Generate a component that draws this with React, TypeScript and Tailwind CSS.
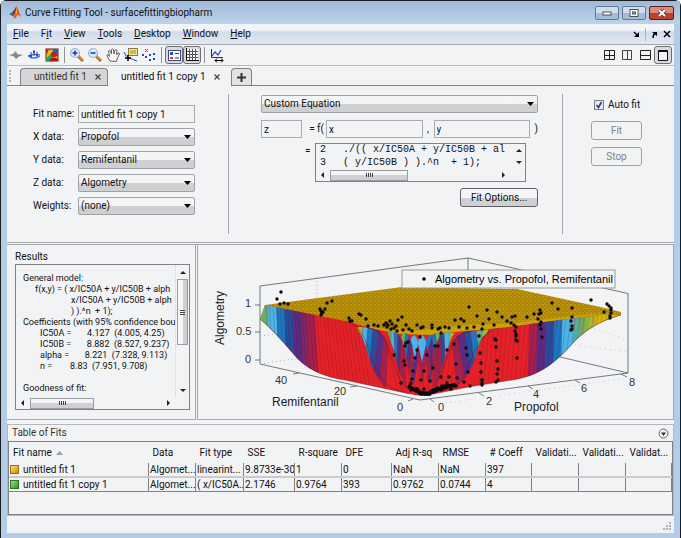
import type { ReactNode } from 'react';

const RAISED = 'bg-linear-to-b from-[#f4f5f6] from-50% to-[#cfd0d1] to-50%';
const FIELD = 'h-[18px] w-full min-w-0 border border-[#a9abad] bg-[#f1f3f5] px-[2px] outline-none';

const MENUS = ['File', 'Fit', 'View', 'Tools', 'Desktop', 'Window', 'Help'];

function Icon({ children, w = 16 }: { children: ReactNode; w?: number }) {
  return (
    <svg width={w} height="16" viewBox={`0 0 ${w} 16`} fill="none" aria-hidden="true">
      {children}
    </svg>
  );
}

function ToolButton({ label, active, children }: { label: string; active?: boolean; children: ReactNode }) {
  return (
    <button
      type="button"
      aria-label={label}
      className={
        active
          ? 'flex h-[18px] w-[18px] items-center justify-center rounded-[3px] border border-[#6d6f73] bg-[#d9dadd]'
          : 'flex h-[18px] w-[18px] items-center justify-center'
      }
    >
      {children}
    </button>
  );
}

function TitleBar() {
  return (
    <header className="flex h-[23px] items-center bg-linear-to-b from-[#9fb9d8] to-[#bcd3ea] pl-[8px] pr-[6px]">
      <svg width="12" height="13" viewBox="0 0 12 13" aria-hidden="true">
        <path d="M0 8 L3.5 6 L6 8 L3.5 10Z" fill="#2a6f9c" />
        <path d="M3.5 6 Q5.500 4 7.500 0 L6.500 7 L4.500 10 L3.500 10 L5 8Z" fill="#7a2a1c" />
        <path d="M7.500 0 Q9 3 12 11 Q10 8.500 8.500 9 Q6.500 12.500 5.500 12.500 L4 9.500 Q6.500 7 7.500 0Z" fill="#e0591c" />
        <path d="M7.500 1 Q8.500 5 8 8 Q6.500 8 6 11Z" fill="#f5a02c" />
      </svg>
      <h1 className="ml-[4px] text-[10px] leading-[16px] whitespace-nowrap">Curve Fitting Tool - surfacefittingbiopharm</h1>
      <div className="ml-auto flex gap-[3px]">
        <button type="button" aria-label="Minimize" className="flex h-[14px] w-[24px] items-center justify-center rounded-[2px] border border-[#66788f] bg-linear-to-b from-[#cfdeee] from-50% to-[#a3bcd8] to-50%">
          <svg width="10" height="6" viewBox="0 0 10 6"><rect x="1" y="2" width="8" height="3" fill="#fff" stroke="#4b5361" /></svg>
        </button>
        <button type="button" aria-label="Maximize" className="flex h-[14px] w-[24px] items-center justify-center rounded-[2px] border border-[#66788f] bg-linear-to-b from-[#cfdeee] from-50% to-[#a3bcd8] to-50%">
          <svg width="10" height="8" viewBox="0 0 10 8"><rect x="1" y=".5" width="8" height="7" fill="#fff" stroke="#4b5361" /><rect x="3.500" y="3" width="3" height="2" fill="#a3bcd8" stroke="#4b5361" /></svg>
        </button>
        <button type="button" aria-label="Close" className="flex h-[14px] w-[25px] items-center justify-center rounded-[2px] border border-[#5c1f1a] bg-linear-to-b from-[#d9897d] from-50% to-[#bf4029] to-50%">
          <svg width="10" height="8" viewBox="0 0 10 8"><path d="M2 1 L8 7 M8 1 L2 7" stroke="#4b3030" strokeWidth="3.500" /><path d="M2 1 L8 7 M8 1 L2 7" stroke="#fff" strokeWidth="2" /></svg>
        </button>
      </div>
    </header>
  );
}

function MenuBar() {
  return (
    <nav className="flex h-[21px] items-center border-b border-[#a5a7aa] bg-linear-to-b from-[#f2f4f8] from-30% via-[#d2dbec] via-40% to-[#e2e8f3] pl-[6px] pr-[3px]">
      {MENUS.map((m) => (
        <button key={m} type="button" className="mr-[12px] leading-[16px]">
          {m === 'Fit' ? (<>F<u>i</u>t</>) : (<><u>{m[0]}</u>{m.slice(1)}</>)}
        </button>
      ))}
      <div className="ml-auto flex items-center gap-[5px]">
        <button type="button" aria-label="Dock down"><svg width="7" height="7" viewBox="0 0 7 7"><path d="M1 1 L5 5" stroke="#000" strokeWidth="1.500" /><path d="M6 1 V6 H1Z" /></svg></button>
        <span className="h-[13px] w-px bg-[#a9b4c6]" />
        <button type="button" aria-label="Undock"><svg width="7" height="7" viewBox="0 0 7 7"><path d="M1 1 H6 V5Z" /><path d="M5 2 Q2 3 2 7" fill="none" stroke="#000" strokeWidth="1.500" /></svg></button>
        <button type="button" aria-label="Close document"><svg width="8" height="8" viewBox="0 0 8 8"><path d="M1 1 L7 7 M7 1 L1 7" stroke="#000" strokeWidth="1.500" /></svg></button>
      </div>
    </nav>
  );
}

function Magnifier({ plus }: { plus?: boolean }) {
  return (
    <Icon>
      <path d="M9 9 L14 14" stroke="#b5641c" strokeWidth="3" />
      <path d="M9.500 9 L13.500 13" stroke="#f4b860" strokeWidth="1" />
      <circle cx="6" cy="6" r="4.500" fill="#d8ecfb" stroke="#9db6d6" strokeWidth="1.200" />
      <path d={plus ? 'M3.500 6 H8.500 M6 3.500 V8.500' : 'M3.500 6 H8.500'} stroke="#143c9c" strokeWidth="1.500" />
    </Icon>
  );
}

function ToolBar() {
  return (
    <div className="flex h-[21px] items-center border-b border-[#b9bbbd] pr-[2px]">
      <ToolButton label="Residuals plot">
        <Icon><path d="M1 8 L5 7 L8 4 L9 7 L15 8 L11 9.500 L8 12 L6 9.500Z" fill="#85888b" /></Icon>
      </ToolButton>
      <ToolButton label="Main plot">
        <Icon><path d="M2 9 Q8 6 14 8 M2 9 Q8 13 14 9 M5 5 V11 M8 3 V9 M11 5 V10" stroke="#2a3cc0" /><path d="M4 8 H6 V10 H4Z M7 4 H9 V6 H7Z M10 7 H12 V9 H10Z" fill="#2447e0" /><path d="M4 11 H11" stroke="#4aa0e8" /></Icon>
      </ToolButton>
      <ToolButton label="Contour plot">
        <Icon><rect x="2" y="2" width="12" height="12" fill="#efb42c" stroke="#5b2410" /><path d="M2 12 Q7 7 10 2 H14 V10 Q10 7 6 14 H2Z" fill="#24a058" /><path d="M9 2 H14 V9 Q9 8 9 2Z" fill="#1c64d0" /><path d="M10 5 A3 2.500 0 1 0 13 7Z M2 3 L5 2 L3 7Z" fill="#d8140c" /><path d="M5 14 Q8 8 14 12 V14Z" fill="#b31408" /></Icon>
      </ToolButton>
      <span className="mx-[3px] h-[16px] w-px bg-[#8f9194]" />
      <ToolButton label="Zoom in"><Magnifier plus /></ToolButton>
      <ToolButton label="Zoom out"><Magnifier /></ToolButton>
      <ToolButton label="Pan">
        <Icon><path d="M5 14 L2 9 Q1.500 7 3.500 8 L4.500 9.500 L3.500 4 Q4 2.500 5.500 4 L6.500 7 L6.500 2.500 Q7.500 1 8.500 2.500 L9 7 L10 3 Q11.500 2 12 3.500 L11.500 8 L13 6 Q14.500 5.500 14.500 7 L12 12 L11.500 14.500Z" fill="#fbf6ee" stroke="#60646b" /></Icon>
      </ToolButton>
      <ToolButton label="Data cursor">
        <Icon><rect x="5.500" y="1.500" width="9" height="7" fill="#f6e58c" stroke="#8c7c34" /><path d="M7 4 H13 M7 6 H13" stroke="#9c8c44" /><path d="M1 5 Q3 10 6 11 T14 14" stroke="#2440c0" /><path d="M5 8 V14 M2 11 H8" stroke="#000" strokeWidth="1.500" /></Icon>
      </ToolButton>
      <ToolButton label="Exclude outliers">
        <Icon><path d="M4 2 L7 5 M7 2 L4 5" stroke="#d83024" /><path d="M1 7 H3 V9 H1Z M4 9 H6 V11 H4Z M8 7 H10 V9 H8Z M12 6 H14 V8 H12Z M8 12 H10 V14 H8Z M12 11 H14 V13 H12Z" fill="#3040c8" /></Icon>
      </ToolButton>
      <span className="mx-[3px] h-[16px] w-px bg-[#8f9194]" />
      <ToolButton label="Legend" active>
        <Icon><rect x="2.500" y="3.500" width="12" height="10" fill="#fff" stroke="#3a4a80" /><path d="M4 5 H7 V8 H4Z" fill="#2c48d0" /><path d="M4 10 H7 V12 H4Z" fill="#d04030" /><path d="M9 6.500 H13 M9 11 H13" stroke="#333" /></Icon>
      </ToolButton>
      <ToolButton label="Grid" active>
        <Icon><rect x="2" y="2" width="12" height="12" fill="#fff" /><path d="M2 4.500 H14 M2 7.500 H14 M2 10.500 H14 M5.500 2 V13 M8.500 2 V13 M11.500 2 V13" stroke="#555" /><path d="M2.500 1 V13.500 H15" stroke="#111" /></Icon>
      </ToolButton>
      <span className="mx-[3px] h-[16px] w-px bg-[#8f9194]" />
      <ToolButton label="Axes limits">
        <Icon><path d="M2.500 2 V10.500 H14" stroke="#333" /><path d="M3 9 L6 5 L9 8 L12 3" stroke="#2440d0" strokeWidth="1.200" /><path d="M6 13.500 H14 M8 11.500 L6 13.500 L8 15.500 M12 11.500 L14 13.500 L12 15.500" stroke="#000" /></Icon>
      </ToolButton>
      <div className="ml-auto flex items-center">
        <ToolButton label="Tile four"><Icon><path d="M3.500 3.500 H13.500 V12.500 H3.500Z M8.500 3.500 V12.500 M3.500 8.500 H13.500" stroke="#222" /></Icon></ToolButton>
        <ToolButton label="Tile left and right"><Icon><path d="M3.500 3.500 H12.500 V12.500 H3.500Z M8.500 3.500 V12.500" stroke="#444" /></Icon></ToolButton>
        <ToolButton label="Tile top and bottom"><Icon><path d="M3.500 3.500 H13.500 V12.500 H3.500Z M3.500 8.500 H13.500" stroke="#222" /></Icon></ToolButton>
        <ToolButton label="Maximize document" active><Icon><path d="M3.500 3.500 H12.500 V13.500 H3.500Z M3.500 4.500 H12.500" stroke="#111" fill="#f4f5f6" /></Icon></ToolButton>
      </div>
    </div>
  );
}

function TabCross() {
  return <svg width="6" height="6" viewBox="0 0 6 6"><path d="M.5 .5 L5.500 5.500 M5.500 .5 L.5 5.500" stroke="#444" strokeWidth="1.200" /></svg>;
}

function TabBar() {
  return (
    <div className="flex h-[20px] items-end border-b border-[#808285] pl-[2px] leading-[16px] whitespace-nowrap" role="tablist">
      <span className="mr-[9px] mb-[3px] h-[12px] border-l-2 border-dotted border-[#b4b6b8]" />
      <div role="tab" className="flex h-[17px] w-[88px] items-center rounded-t-[4px] border border-b-0 border-[#808285] bg-[#d4d5d6] pl-[13px] text-[#333]">
        untitled fit 1
        <button type="button" aria-label="Close tab" className="mr-[6px] ml-auto"><TabCross /></button>
      </div>
      <div role="tab" aria-selected="true" className="-mb-px flex h-[19px] w-[123px] items-center bg-[#f1f3f5] pl-[13px]">
        untitled fit 1 copy 1
        <button type="button" aria-label="Close tab" className="mr-[11px] ml-auto"><TabCross /></button>
      </div>
      <button type="button" aria-label="New fit" className="flex h-[17px] w-[21px] items-center justify-center rounded-t-[4px] border border-b-0 border-[#808285] bg-[#e2e3e5]">
        <svg width="9" height="9" viewBox="0 0 9 9"><path d="M4.500 0 V9 M0 4.500 H9" stroke="#333" strokeWidth="2" /></svg>
      </button>
    </div>
  );
}

function Select({ id, value, label }: { id: string; value: string; label?: string }) {
  return (
    <div className="relative w-full">
      <select id={id} aria-label={label} defaultValue={value} className={`block h-[18px] w-full appearance-none rounded-[2px] border border-[#a0a2a5] pl-[2px] outline-none ${RAISED}`}>
        <option>{value}</option>
      </select>
      <svg className="pointer-events-none absolute top-[7px] right-[4px]" width="7" height="4" viewBox="0 0 7 4"><path d="M0 0 H7 L3.500 4Z" /></svg>
    </div>
  );
}

function Row({ id, label, children }: { id: string; label: string; children: ReactNode }) {
  return (
    <div className="flex items-center">
      <label htmlFor={id} className="w-[45px] shrink-0 whitespace-nowrap">{label}</label>
      <div className="w-[117px]">{children}</div>
    </div>
  );
}

function Arrow({ dir }: { dir: 'up' | 'down' | 'left' | 'right' }) {
  const d = { up: 'M0 5 H6 L3 2Z', down: 'M0 1 H6 L3 4Z', left: 'M5 0 V6 L2 3Z', right: 'M1 0 V6 L4 3Z' }[dir];
  return <svg className="shrink-0" width="6" height="6" viewBox="0 0 6 6"><path d={d} fill="#222" /></svg>;
}

function HScroll({ thumb }: { thumb: string }) {
  return (
    <div className="flex h-[12px] items-center px-[3px]">
      <Arrow dir="left" />
      <div className={`ml-[5px] flex h-[11px] items-center justify-center gap-px border border-[#9a9c9f] ${RAISED} ${thumb}`}>
        {[0, 1, 2, 3].map((i) => <i key={i} className="h-[4px] w-px bg-[#444]" />)}
      </div>
      <span className="ml-auto"><Arrow dir="right" /></span>
    </div>
  );
}

const CODE = [
  ['2', './(( x/IC50A + y/IC50B + al'],
  ['3', '( y/IC50B ) ).^n  + 1);'],
];

function FitPanel() {
  return (
    <section className="flex min-h-[157px] border-b border-[#a5a7aa] py-[8px]">
      <div className="flex w-[222px] shrink-0 flex-col gap-[5px] border-r border-[#a5a7aa] pt-[11px] pl-[26px]">
        <Row id="fit-name" label="Fit name:"><input id="fit-name" defaultValue="untitled fit 1 copy 1" className={FIELD} /></Row>
        <Row id="x-data" label="X data:"><Select id="x-data" value="Propofol" /></Row>
        <Row id="y-data" label="Y data:"><Select id="y-data" value="Remifentanil" /></Row>
        <Row id="z-data" label="Z data:"><Select id="z-data" value="Algometry" /></Row>
        <Row id="weights" label="Weights:"><Select id="weights" value="(none)" /></Row>
      </div>
      <div className="min-w-0 flex-1 pt-px pr-[24px] pl-[32px]">
        <Select id="equation-type" label="Equation type" value="Custom Equation" />
        <div className="mt-[7px] flex items-center">
          <div className="w-[41px] shrink-0"><input aria-label="Output variable" defaultValue="z" className={FIELD} /></div>
          <span className="w-[22px] shrink-0 text-right">= f(</span>
          <input aria-label="First variable" defaultValue="x" className={`ml-[2px] flex-1 ${FIELD}`} />
          <span className="w-[11px] shrink-0 text-center">,</span>
          <input aria-label="Second variable" defaultValue="y" className={`flex-1 ${FIELD}`} />
          <span className="w-[8px] shrink-0 text-right">)</span>
        </div>
        <div className="mt-[5px] flex">
          <span className="w-[54px] shrink-0 pl-[44px] leading-[16px]">=</span>
          <div className="mr-[12px] h-[39px] min-w-0 flex-1 border border-[#808285]">
            <div className="flex h-[25px] items-end">
              <div className="min-w-0 flex-1 pl-[4px] font-['Liberation_Mono',monospace] leading-[13px] whitespace-pre">
                {CODE.map(([n, text]) => (
                  <p key={n} className="flex"><span className="w-[23px] shrink-0">{n}</span>{text}</p>
                ))}
              </div>
              <div className="flex h-full w-[13px] shrink-0 flex-col items-center justify-around"><Arrow dir="up" /><Arrow dir="down" /></div>
            </div>
            <div className="pr-[15px]"><HScroll thumb="w-[78px]" /></div>
          </div>
        </div>
        <div className="mt-[6px] flex justify-end">
          <button type="button" className={`h-[19px] w-[78px] rounded-[3px] border border-[#5f6164] ${RAISED}`}>Fit Options...</button>
        </div>
      </div>
      <div className="flex w-[112px] shrink-0 flex-col border-l border-[#a5a7aa] pt-[4px] pl-[28px]">
        <label className="flex h-[14px] items-center gap-[4px] pl-[3px]">
          <span className="relative flex h-[10px] w-[10px]">
            <input type="checkbox" defaultChecked className="peer h-[10px] w-[10px] appearance-none border border-[#7c8086] bg-[#e4e9f2]" />
            <svg className="pointer-events-none absolute inset-0 hidden peer-checked:block" width="10" height="10" viewBox="0 0 10 10"><path d="M2.500 5 L4.500 7.500 L7.500 2" fill="none" stroke="#2c3f8c" strokeWidth="1.600" /></svg>
          </span>
          Auto fit
        </label>
        <button type="button" disabled className="mt-[9px] h-[19px] w-[51px] rounded-[3px] border border-[#a0a2a5] text-[#808285]">Fit</button>
        <button type="button" disabled className="mt-[7px] h-[19px] w-[51px] rounded-[3px] border border-[#a0a2a5] text-[#808285]">Stop</button>
      </div>
    </section>
  );
}

const RESULTS = [
  ['pl-0', 'General model:'],
  ['pl-[12px]', 'f(x,y) = ( x/IC50A + y/IC50B + alph'],
  ['pl-[48px]', 'x/IC50A + y/IC50B + alph'],
  ['pl-[48px]', ') ).^n  + 1);'],
  ['pl-0', 'Coefficients (with 95% confidence bou'],
  ['pl-[17px]', 'IC50A =       4.127  (4.005, 4.25)'],
  ['pl-[17px]', 'IC50B =       8.882  (8.527, 9.237)'],
  ['pl-[17px]', 'alpha =       8.221  (7.328, 9.113)'],
  ['pl-[17px]', 'n =        8.83  (7.951, 9.708)'],
  ['pl-0', ' '],
  ['pl-0', 'Goodness of fit:'],
];

function ResultsPanel() {
  return (
    <section className="flex w-[189px] shrink-0 flex-col border-r border-b border-[#a5a7aa] pt-[5px] pr-[5px] pb-[9px] pl-[8px]">
      <h2 className="leading-[14px]">Results</h2>
      <div className="flex min-h-[146px] flex-1 flex-col border border-[#808285]">
        <div className="flex flex-1">
          <div className="min-w-0 flex-1 overflow-hidden pt-[8px] pl-[7px] text-[9px] leading-[11px] whitespace-pre">
            {RESULTS.map(([pad, text], i) => <p key={i} className={pad}>{text}</p>)}
          </div>
          <div className="flex w-[14px] flex-col items-center border-l border-dotted border-[#cfd1d3] pt-[4px] pb-[3px]">
            <Arrow dir="up" />
            <div className="mt-[4px] flex h-[66px] w-[11px] flex-col items-center justify-center gap-px border border-[#9a9c9f] bg-linear-to-r from-[#f4f5f6] from-50% to-[#cfd0d1] to-50%">
              {[0, 1, 2].map((i) => <i key={i} className="h-px w-[5px] bg-[#444]" />)}
            </div>
            <span className="mt-auto flex"><Arrow dir="down" /></span>
          </div>
        </div>
        <div className="pr-[14px]"><HScroll thumb="w-[64px]" /></div>
      </div>
    </section>
  );
}

const G = '#6cb060', LG = '#9cba38', C = '#4cb4ea', T = '#58b09c', B = '#1c78c0', D = '#2a4c9c', P = '#5c2c84', M = '#a4204c', R = '#e42228', Y = '#d8b40c';

type Pt = [number, number];
type Sheet = { top: Pt[]; edge: Pt[]; fill: string[] };

const SIDE_BANDS: [number, number, string][] = [
  [258, 265, G], [265, 268, T], [268, 276, C], [276, 284, B], [284, 292, D], [292, 300, P], [300, 306, '#7c2868'], [306, 314, M],
  [530, 538, M], [538, 547, P], [547, 555, D], [555, 563, B], [563, 575, C], [575, 581, T], [581, 586, G], [586, 595, LG], [595, 624, Y],
];

// Folds seen behind the front faces, listed from the middle outwards.
const SHEETS: Sheet[] = [
  { top: [[402, 334], [406, 333], [409, 336], [412, 345], [414, 356]], edge: [[401, 337], [404, 346], [407, 358], [409, 370], [411, 382]], fill: [G, B, P, M] },
  { top: [[439, 334], [435, 333], [432, 337], [429, 346], [426, 357]], edge: [[440, 337], [437, 346], [434, 358], [431, 370], [428, 382]], fill: [G, B, P, M] },
  { top: [[387, 331], [391, 331], [394, 332], [398, 334], [401, 340], [405, 352]], edge: [[388, 333], [391, 343], [395, 353], [397, 363], [400, 373], [406, 388]], fill: [G, C, B, P, M] },
  { top: [[455, 333], [449, 332], [444, 333], [440, 336], [436, 344], [432, 356]], edge: [[452, 337], [449, 345], [445, 356], [442, 367], [439, 377], [434, 388]], fill: [LG, C, D, M, M] },
  { top: [[358, 327], [363, 327], [368, 328], [373, 329], [379, 331], [384, 337], [388, 346]], edge: [[357, 328], [362, 337], [366, 348], [370, 361], [374, 371], [379, 380], [386, 388]], fill: [LG, C, B, D, P, M] },
  { top: [[489, 329], [482, 330], [476, 331], [470, 331], [464, 332], [457, 336], [452, 344]], edge: [[487, 333], [482, 338], [478, 348], [474, 361], [470, 370], [465, 378], [457, 386]], fill: [LG, T, B, D, P, M] },
];

const PETALS: [number, string, string][] = [[414, C, P], [422, C, M], [430, B, P]];

const SILHOUETTE = 'M265 305 L345 321 Q360 325 375 329 L400 334 L430 335 L455 332 L500 328 L560 320 L600 315 L621 315 C600 321 585 330 573 343 C556 362 540 376 512 380 Q470 386 428 395 Q420 397 410 394 L345 380 C318 376 305 366 297 358 C285 344 274 331 260 319Z';

const DOTS: Pt[] = [
  [281, 292], [277, 299], [280, 304], [284, 303], [288, 304], [327, 303], [332, 301], [320, 309], [325, 309], [321, 311], [323, 312], [321, 315], [322, 313],
  [359, 314], [361, 315], [366, 319], [349, 318], [350, 321], [352, 321], [368, 326], [374, 325], [378, 326], [384, 325], [386, 323], [388, 325], [390, 321], [392, 324], [394, 328], [387, 327],
  [391, 329], [397, 331], [398, 320], [402, 317], [403, 330], [406, 325], [409, 329], [412, 331], [417, 325], [421, 328], [423, 327], [432, 328], [396, 326],
  [432, 325], [440, 328], [438, 329], [445, 327], [449, 328], [441, 333], [455, 320], [461, 319], [464, 321], [459, 327], [467, 328], [469, 307], [477, 316], [474, 327], [483, 324], [487, 310], [489, 319], [494, 325], [497, 312], [502, 317], [507, 321], [511, 323], [515, 316], [512, 317], [514, 325], [527, 317], [534, 314], [540, 310], [539, 314], [541, 313], [538, 319], [541, 322], [540, 325], [541, 329], [542, 337],
  [552, 303], [558, 309], [572, 308], [591, 300], [572, 317], [571, 321], [572, 326], [572, 329], [571, 330], [607, 304], [609, 306], [611, 308], [611, 310], [611, 313], [610, 316], [610, 318], [604, 312],
  [516, 327], [515, 331], [516, 334], [516, 336], [516, 340], [517, 341], [517, 358], [479, 336], [482, 329], [495, 339], [496, 340], [496, 347], [480, 353], [466, 348], [467, 355], [481, 363], [497, 361], [498, 369], [497, 374], [498, 380], [481, 372], [482, 380], [468, 372], [456, 364], [447, 350], [433, 368], [438, 346], [454, 344], [441, 377], [449, 377], [457, 378], [482, 383], [482, 385], [496, 382],
  [394, 355], [404, 361], [405, 365], [406, 343], [405, 346], [408, 342], [417, 350], [415, 358], [427, 355], [413, 371], [421, 380], [412, 379], [424, 371], [411, 383], [409, 387], [401, 383], [430, 381], [420, 337], [435, 346], [424, 389], [442, 386], [447, 383], [451, 389], [470, 386], [464, 382], [410, 385],
];

const CLUSTER = Array.from({ length: 70 }, (_, i): Pt => {
  const x = 411 + ((i * 17) % 46);
  return [x, 390 + Math.round(Math.sin(i * 2.3) * 2) + (x > 430 ? -Math.round((x - 430) / 9) : x > 418 ? 2 : 0)];
});

function pts(list: Pt[]) {
  return list.map((p) => p.join(',')).join(' ');
}

function SurfacePlot() {
  return (
    <svg viewBox="198 245 475 174" className="block w-full flex-1" role="img" aria-label="Algometry vs. Propofol, Remifentanil" fontFamily="'Liberation Sans', Arial, sans-serif">
      <defs>
        <pattern id="weave" width="4" height="4" patternUnits="userSpaceOnUse"><rect width="4" height="4" fill="#b8900c" /><path d="M0 1 L2 2 M2 3 L4 4" stroke="#86680a" strokeWidth=".6" /><path d="M2 0 L4 1" stroke="#c8a010" strokeWidth=".6" /></pattern>
        <clipPath id="face"><path d={SILHOUETTE} /></clipPath>
      </defs>
      <g fill="none" stroke="#55585b" strokeWidth=".8">
        <path d="M260 364 V286 L468 258 L628 293.500 V373 L420 400 Z M468 258 V290 M556 356 L628 373" />
        <path d="M317 277 V300 M260 336 L285 333 M260 364 L300 358" strokeDasharray="1 3" stroke="#999" />
        <path d="M575 345 L628 352 M590 327 L628 341 M430 405 L628 378" strokeDasharray="1 4" stroke="#bbb" />
        <path d="M255 305 H260 M255 332 H260 M255 360 H260 M299 373 L293 374 M357 386 L350 387 M413 399 L408 401 M430 399 L434 402 M479 393 L484 396 M528 386 L533 389 M575 380 L580 383 M621 374 L627 377" />
      </g>
      <path d="M265 305 L402 287 L517 289 L605 308 L621 312 L621 315 L590 319 L500 331 L455 336 L400 336 L360 329Z" fill="url(#weave)" />
      <path d="M352 323 Q395 334 430 329 T505 324 L590 314 L621 315 L500 332 L450 340 L400 340Z" fill={Y} opacity=".6" />
      <g clipPath="url(#face)">
        <rect x="255" y="300" width="372" height="100" fill={R} />
        {SIDE_BANDS.map(([a, b, fill]) => <path key={a} d={`M${a} 300 H${b} L${a < 400 ? b + 6 : b - 3} 400 H${a < 400 ? a + 4 : a - 3}Z`} fill={fill} />)}
      </g>
      <g clipPath="url(#face)" stroke="#40101c" strokeWidth=".4" opacity=".45">
        {Array.from({ length: 27 }, (_, i) => <path key={i} d={`M${266 + i * 3.500} 300 L${270 + i * 3.900} 400`} />)}
        {Array.from({ length: 30 }, (_, i) => <path key={i} d={`M${487 + i * 4.500} 300 L${478 + i * 4.400} 400`} />)}
        {Array.from({ length: 14 }, (_, i) => <path key={i} d={`M${386 + i * 6} 340 L${400 + i * 4} 400`} />)}
      </g>
      {PETALS.map(([x, top, low]) => (
        <g key={x}>
          <path d={`M${x - 4} 344 Q${x - 5} 360 ${x} 384 Q${x + 5} 360 ${x + 4} 344Z`} fill={low} />
          <path d={`M${x} 335 Q${x + 4} 338 ${x + 4} 344 L${x} 362 L${x - 4} 344 Q${x - 4} 338 ${x} 335Z`} fill={top} />
        </g>
      ))}
      {SHEETS.map((s, k) => (
        <g key={k} stroke="#333" strokeWidth=".15">
          {s.fill.map((fill, i) => <polygon key={i} points={pts([s.top[i], s.top[i + 1], s.edge[i + 1], s.edge[i]])} fill={fill} />)}
        </g>
      ))}
      <g fill="none" stroke="#4a1c24" strokeWidth=".4">
        <path d="M345 321 C368 326 367 356 381 377 Q388 390 405 392" />
        <path d="M368 328 C390 331 388 352 397 373 Q402 387 411 391" />
        <path d="M500 328 C475 332 474 362 460 382 Q455 388 448 390" />
        <path d="M472 331 C450 334 448 358 440 377 L434 390" />
        <path d="M260 319 C274 331 285 344 297 358 C305 366 318 376 345 380 L410 394 M428 395 Q470 386 512 380 C540 376 556 362 573 343 C585 330 600 321 621 315" />
      </g>
      <g fill="#0b0b0b">
        {DOTS.map(([x, y], i) => <circle key={i} cx={x} cy={y} r="1.700" />)}
        {CLUSTER.map(([x, y], i) => <circle key={i} cx={x} cy={y} r="1.700" />)}
      </g>
      <rect x="402" y="270" width="213" height="18" fill="#f1f3f5" stroke="#9a9c8f" />
      <circle cx="424" cy="279" r="1.800" />
      <text x="435" y="283" fontSize="11">Algometry vs. Propofol, Remifentanil</text>
      <g fontSize="11" fill="#333">
        <text x="245" y="307">1</text><text x="236" y="335">0.5</text><text x="245" y="363">0</text>
        <text x="275" y="384">40</text><text x="334" y="395">20</text><text x="397" y="411">0</text>
        <text x="438" y="411">0</text><text x="486" y="405">2</text><text x="533" y="398">4</text><text x="581" y="392">6</text><text x="629" y="386">8</text>
      </g>
      <g fontSize="12" fill="#222">
        <text x="272" y="406">Remifentanil</text>
        <text x="514" y="411">Propofol</text>
        <text transform="translate(224 345) rotate(-90)">Algometry</text>
      </g>
    </svg>
  );
}

const COLUMNS: [string, string][] = [
  ['Fit name', ''], ['Data', 'w-[47px]'], ['Fit type', 'w-[48px]'], ['SSE', 'w-[51px]'], ['R-square', 'w-[47px]'], ['DFE', 'w-[50px]'],
  ['Adj R-sq', 'w-[47px]'], ['RMSE', 'w-[47px]'], ['# Coeff', 'w-[46px]'], ['Validati...', 'w-[47px]'], ['Validati...', 'w-[47px]'], ['Validat...', 'w-[46px]'],
];

const FITS = [
  { swatch: 'from-[#ffe070] to-[#c88a04] border-[#9c6c08]', cells: ['untitled fit 1', 'Algomet...', 'linearint...', '9.8733e-30', '1', '0', 'NaN', 'NaN', '397', '', '', ''] },
  { swatch: 'from-[#98e078] to-[#2c9420] border-[#2c7424]', cells: ['untitled fit 1 copy 1', 'Algomet...', '( x/IC50A...', '2.1746', '0.9764', '393', '0.9762', '0.0744', '4', '', '', ''] },
];

function FitsTable() {
  return (
    <section className="mt-[4px] border border-[#b5b7ba]">
      <div className="flex h-[16px] items-center justify-between pr-[4px] pl-[4px]">
        <h2 className="text-[#333]">Table of Fits</h2>
        <button type="button" aria-label="Collapse table">
          <svg width="11" height="11" viewBox="0 0 11 11"><circle cx="5.500" cy="5.500" r="4.500" fill="none" stroke="#666" /><path d="M3 4.500 H8 L5.500 8Z" fill="#333" /></svg>
        </button>
      </div>
      <div className="min-h-[74px] border border-[#808285]">
        <table className="w-full table-fixed border-collapse whitespace-nowrap">
          <thead>
            <tr className="h-[21px] text-left">
              {COLUMNS.map(([name, width], i) => (
                <th key={i} scope="col" className={`overflow-hidden p-0 pl-[4px] font-normal ${width}`}>
                  {name}
                  {i === 0 && <svg className="ml-[4px] inline" width="7" height="4" viewBox="0 0 7 4"><path d="M0 4 H7 L3.500 0Z" fill="#999" /></svg>}
                </th>
              ))}
            </tr>
          </thead>
          <tbody>
            {FITS.map((fit, r) => (
              <tr key={r} className={r === 0 ? 'border-b-2 border-[#c9cbcd]' : 'border-b border-[#808285]'}>
                {fit.cells.map((cell, i) => (
                  <td key={i} className="overflow-hidden border-r border-r-[#808285] p-0 pl-px leading-[13px]">
                    {i === 0 ? (
                      <span className="flex items-center gap-[4px]"><i className={`h-[9px] w-[9px] border bg-linear-to-br ${fit.swatch}`} />{cell}</span>
                    ) : cell}
                  </td>
                ))}
              </tr>
            ))}
          </tbody>
        </table>
      </div>
    </section>
  );
}

export default function App() {
  return (
    <div className="flex min-h-screen flex-col rounded-t-[6px] border border-[#1a1c20] bg-[#b5cce6] font-['Roboto',sans-serif] text-[10px] leading-[14px] text-[#111]">
      <TitleBar />
      <main className="mr-[6px] mb-[5px] ml-[6px] flex flex-1 flex-col bg-[#f1f3f5]">
        <MenuBar />
        <ToolBar />
        <TabBar />
        <FitPanel />
        <div className="mt-px flex border-t border-[#a5a7aa]">
          <ResultsPanel />
          <section className="ml-px flex min-w-0 flex-1 border border-t-0 border-[#a5a7aa]"><SurfacePlot /></section>
        </div>
        <FitsTable />
        <footer className="flex min-h-[17px] flex-1 items-end justify-end p-[2px]">
          <svg width="9" height="9" viewBox="0 0 9 9" fill="#b0b2b4"><path d="M6 0h2v2h-2z M3 3h2v2h-2z M6 3h2v2h-2z M0 6h2v2h-2z M3 6h2v2h-2z M6 6h2v2h-2z" /></svg>
        </footer>
      </main>
    </div>
  );
}
